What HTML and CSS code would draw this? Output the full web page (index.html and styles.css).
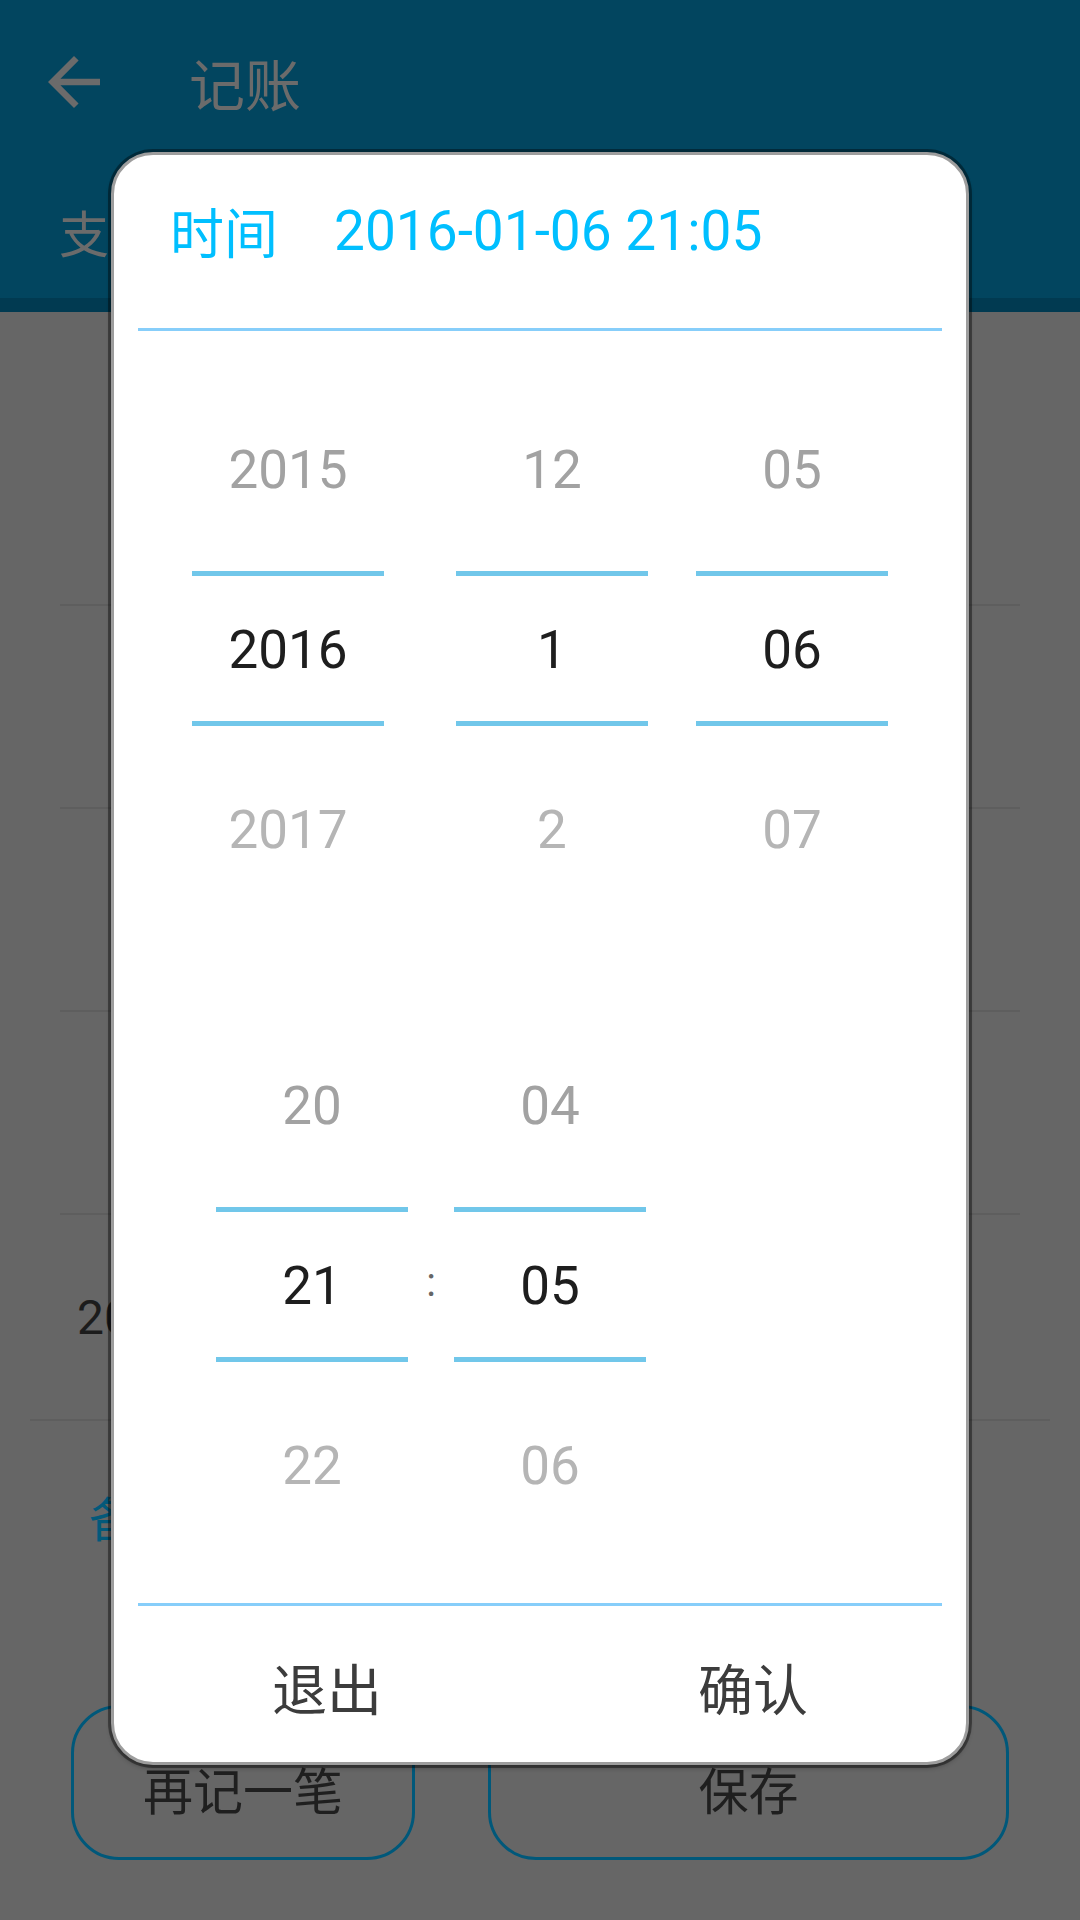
FILE: index.html
```html
<!DOCTYPE html>
<html lang="zh-CN">
<head>
<meta charset="utf-8">
<title>记账</title>
<link rel="stylesheet" href="styles.css">
</head>
<body>
<div class="page">
  <header class="appbar">
    <div class="toolbar">
      <svg class="back" viewBox="0 0 24 24" aria-hidden="true"><path d="M20 11H7.83l5.59-5.59L12 4l-8 8 8 8 1.41-1.41L7.83 13H20v-2z"/></svg>
      <span class="title">记账</span>
    </div>
    <div class="tabs">
      <span class="tab">支出</span>
    </div>
  </header>

  <main class="form">
    <div class="row row-amount"></div>
    <div class="row"></div>
    <div class="row"></div>
    <div class="row"></div>
    <div class="row row-time"><span class="time-value">2016</span></div>
    <div class="divider-wide"></div>
    <div class="note"><span class="note-label">备注</span></div>
  </main>

  <div class="actions">
    <div class="btn btn-again">再记一笔</div>
    <div class="btn btn-save">保存</div>
  </div>
</div>

<div class="dialog">
  <div class="dialog-title"><span class="dt-label">时间</span><span class="dt-value">2016-01-06 21:05</span></div>
  <div class="dialog-rule"></div>

  <div class="pickers">
    <div class="wheels wheels-date">
      <div class="wheel">
        <div class="item prev">2015</div>
        <div class="item cur">2016</div>
        <div class="item next">2017</div>
      </div>
      <div class="wheel">
        <div class="item prev">12</div>
        <div class="item cur">1</div>
        <div class="item next">2</div>
      </div>
      <div class="wheel">
        <div class="item prev">05</div>
        <div class="item cur">06</div>
        <div class="item next">07</div>
      </div>
    </div>

    <div class="wheels wheels-time">
      <div class="wheel">
        <div class="item prev">20</div>
        <div class="item cur">21</div>
        <div class="item next">22</div>
      </div>
      <div class="colon">:</div>
      <div class="wheel">
        <div class="item prev">04</div>
        <div class="item cur">05</div>
        <div class="item next">06</div>
      </div>
    </div>
  </div>

  <div class="dialog-rule"></div>
  <div class="dialog-buttons">
    <div class="dbtn">退出</div>
    <div class="dbtn">确认</div>
  </div>
</div>
</body>
</html>
```

FILE: styles.css
```css
* { box-sizing: border-box; }

html, body {
  margin: 0;
  padding: 0;
}

body {
  width: 1080px;
  height: 1920px;
  overflow: hidden;
  background: #666666;
  font-family: Roboto, "Noto Sans CJK SC", sans-serif;
  position: relative;
}

.page {
  width: 1080px;
  height: 1920px;
  display: flex;
  flex-direction: column;
}

/* ---------- app bar (dimmed) ---------- */
.appbar {
  background: #02455f;
  border-bottom: 14px solid #013a51;
  height: 312px;
  display: flex;
  flex-direction: column;
}

.toolbar {
  height: 164px;
  display: flex;
  align-items: center;
}

.back {
  width: 78px;
  height: 78px;
  margin-left: 35px;
  fill: #6b6b6b;
}

.title {
  margin-left: 76px;
  font-family: "Noto Sans CJK SC", sans-serif;
  font-size: 56px;
  color: #6b6b6b;
  line-height: 1;
}

.tabs {
  height: 134px;
  display: flex;
  align-items: center;
  padding-left: 59px;
}

.tab {
  font-family: "Noto Sans CJK SC", sans-serif;
  font-size: 50px;
  color: #6b6b6b;
  line-height: 1;
}

/* ---------- form (dimmed) ---------- */
.form {
  padding: 0 60px;
  display: flex;
  flex-direction: column;
}

.row {
  height: 203px;
  border-bottom: 2px solid #5e5e5e;
  display: flex;
  align-items: center;
}

.row-amount { height: 294px; }

.row-time {
  height: 204px;
  border-bottom: none;
  padding-left: 17px;
}

.time-value {
  font-family: Roboto, sans-serif;
  font-size: 48px;
  color: #1c1c1c;
}

.divider-wide {
  height: 2px;
  background: #5e5e5e;
  margin: 0 -30px;
}

.note {
  height: 190px;
  display: flex;
  align-items: center;
  padding-left: 29px;
}

.note-label {
  font-family: "Noto Sans CJK SC", sans-serif;
  font-size: 48px;
  color: #03597a;
}

.actions {
  margin-top: 94px;
  padding: 0 71px;
  display: flex;
  gap: 73px;
}

.btn {
  height: 155px;
  border: 3px solid #00587a;
  border-radius: 48px;
  display: flex;
  align-items: center;
  justify-content: center;
  padding-top: 10px;
  font-family: "Noto Sans CJK SC", sans-serif;
  font-size: 50px;
  color: #1f1f1f;
}

.btn-again { width: 344px; }
.btn-save { flex: 1; }

/* ---------- dialog ---------- */
.dialog {
  position: absolute;
  left: 111px;
  top: 152px;
  width: 858px;
  height: 1613px;
  background: #ffffff;
  border: 3px solid #9d9d9d;
  border-radius: 42px;
  box-shadow: 0 0 0 3px rgba(0, 0, 0, 0.38), 0 3px 5px rgba(0, 0, 0, 0.3);
  display: flex;
  flex-direction: column;
}

.dialog-title {
  height: 173px;
  padding: 40px 0 0 56px;
  display: flex;
  align-items: flex-start;
  color: #00bfff;
}

.dt-label {
  font-family: "Noto Sans CJK SC", sans-serif;
  font-size: 54px;
  line-height: 72px;
}

.dt-value {
  margin-left: 56px;
  font-family: Roboto, sans-serif;
  font-size: 55px;
  line-height: 72px;
}

.dialog-rule {
  height: 3px;
  margin: 0 24px;
  background: #87cefa;
  flex: none;
}

.pickers {
  padding: 49px 0 47px;
  display: flex;
  flex-direction: column;
  gap: 96px;
}

.wheels {
  display: flex;
}

.wheels-date {
  padding-left: 78px;
}

.wheels-date .wheel:nth-child(1) { margin-right: 72px; }
.wheels-date .wheel:nth-child(2) { margin-right: 48px; }

.wheels-time {
  padding-left: 102px;
}

.wheel {
  width: 192px;
  position: relative;
  display: flex;
  flex-direction: column;
}

.wheel::before,
.wheel::after {
  content: "";
  position: absolute;
  left: 0;
  right: 0;
  height: 5px;
  background: #71c7ea;
}

.wheel::before { top: 191px; }
.wheel::after { top: 341px; }

.item {
  height: 180px;
  line-height: 180px;
  text-align: center;
  font-family: Roboto, sans-serif;
  font-size: 53px;
}

.item.prev { color: #a2a2a2; }
.item.cur { color: #1e1e1e; }
.item.next { color: #b5b5b5; }

.colon {
  width: 46px;
  padding-top: 180px;
  line-height: 174px;
  height: 540px;
  text-align: center;
  font-family: Roboto, sans-serif;
  font-size: 40px;
  color: #666666;
}

.dialog-buttons {
  flex: 1;
  display: flex;
  padding-top: 50px;
}

.dbtn {
  flex: 1;
  text-align: center;
  font-family: "Noto Sans CJK SC", sans-serif;
  font-size: 55px;
  line-height: 60px;
  color: #3c3c3c;
}
```
